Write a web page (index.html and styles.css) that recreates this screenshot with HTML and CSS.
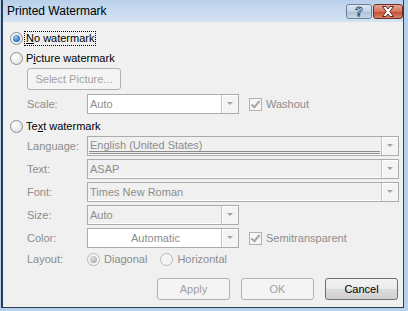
FILE: index.html
```html
<!DOCTYPE html>
<html lang="en">
<head>
    <meta charset="UTF-8">
    <title>Printed Watermark</title>
    <link rel="stylesheet" href="styles.css">
</head>
<body>
    <div class="window">
        <div class="frame">
            <!-- Title bar -->
            <div class="titlebar">
                <span class="title">Printed Watermark</span>
                <div class="caption-buttons">
                    <span class="cap help">?</span>
                    <span class="cap close">
                        <svg width="14" height="11" viewBox="0 0 14 11">
                            <path d="M1.5 0.5 H5 L7 3 L9 0.5 H12.5 L8.8 5.5 L12.5 10.5 H9 L7 8 L5 10.5 H1.5 L5.2 5.5 Z" fill="#fff" stroke="#5a2a22" stroke-width="1" stroke-linejoin="round"/>
                        </svg>
                    </span>
                </div>
            </div>

            <!-- Dialog body -->
            <div class="client">
                <div class="opt first">
                    <span class="radio on"></span>
                    <span class="focus"><u>N</u>o watermark</span>
                </div>
                <div class="opt">
                    <span class="radio"></span>
                    <span class="opt-text">P<u>i</u>cture watermark</span>
                </div>
                <div class="indent">
                    <span class="btn disabled pic">Select Picture...</span>
                </div>
                <div class="field">
                    <span class="label">Scale:</span>
                    <div class="combo short white">
                        <span class="val">Auto</span>
                        <span class="drop"></span>
                    </div>
                    <span class="check"></span>
                    <span class="muted">Washout</span>
                </div>
                <div class="opt">
                    <span class="radio"></span>
                    <span class="opt-text">Te<u>x</u>t watermark</span>
                </div>
                <div class="field tight">
                    <span class="label">Language:</span>
                    <div class="combo long">
                        <span class="val lined">English (United States)</span>
                        <span class="drop"></span>
                    </div>
                </div>
                <div class="field">
                    <span class="label">Text:</span>
                    <div class="combo long">
                        <span class="val">ASAP</span>
                        <span class="drop"></span>
                    </div>
                </div>
                <div class="field">
                    <span class="label">Font:</span>
                    <div class="combo long">
                        <span class="val">Times New Roman</span>
                        <span class="drop"></span>
                    </div>
                </div>
                <div class="field">
                    <span class="label">Size:</span>
                    <div class="combo short">
                        <span class="val">Auto</span>
                        <span class="drop"></span>
                    </div>
                </div>
                <div class="field">
                    <span class="label">Color:</span>
                    <div class="combo short white">
                        <span class="val center">Automatic</span>
                        <span class="drop"></span>
                    </div>
                    <span class="check"></span>
                    <span class="muted">Semitransparent</span>
                </div>
                <div class="field layout">
                    <span class="label">Layout:</span>
                    <span class="radio dis on"></span>
                    <span class="muted radio-label">Diagonal</span>
                    <span class="radio dis"></span>
                    <span class="muted radio-label">Horizontal</span>
                </div>

                <!-- Dialog buttons -->
                <div class="actions">
                    <span class="btn disabled">Apply</span>
                    <span class="btn disabled">OK</span>
                    <span class="btn">Cancel</span>
                </div>
            </div>
        </div>
    </div>
</body>
</html>
```

FILE: styles.css
```css
/* General */
body {
    margin: 0;
    font-family: "Liberation Sans", Arial, sans-serif;
    font-size: 11px;
    color: #000;
}

.window {
    width: 408px;
    height: 311px;
    box-sizing: border-box;
    padding: 0 4px 3px 1px;
    background: #b6d1ec;
}
.frame {
    height: 100%;
    box-sizing: border-box;
    border-left: 2px solid #2c3e56;
    border-right: 1px solid #2c3e56;
    border-bottom: 1px solid #2c3e56;
    display: flex;
    flex-direction: column;
}

/* Title bar */
.titlebar {
    height: 22px;
    flex: none;
    display: flex;
    align-items: center;
    justify-content: space-between;
    padding: 0 0 0 4px;
    background: linear-gradient(to bottom, #b9d0ea 0%, #c6d9ee 45%, #d4e3f3 100%);
}
.title {
    font-size: 12px;
    color: #000;
    margin-top: -1px;
}
.caption-buttons {
    display: flex;
    gap: 1px;
    align-self: flex-start;
    margin-top: 4px;
}
.cap {
    height: 15px;
    box-sizing: border-box;
    border: 1px solid #6b7f99;
    border-radius: 3px;
    display: flex;
    align-items: center;
    justify-content: center;
}
.help {
    width: 26px;
    background: linear-gradient(to bottom, #dfe8f2 0%, #c4d3e4 50%, #aebfd4 51%, #c9d8e8 100%);
    color: #fff;
    font-weight: bold;
    font-size: 13px;
    -webkit-text-stroke: 0.8px #2f3f55;
    line-height: 1;
}
.close {
    width: 30px;
    border-color: #6d2e24;
    background: linear-gradient(to bottom, #e8a595 0%, #d7745e 50%, #c54a30 51%, #d9836b 100%);
}

/* Dialog body */
.client {
    flex: 1;
    background: #f0f0f0;
    display: flex;
    flex-direction: column;
    color: #000;
}

.opt {
    height: 16px;
    display: flex;
    align-items: center;
    margin-top: 4px;
    padding-left: 7px;
}
.opt.first {
    margin-top: 8px;
}
.opt-text {
    padding-left: 3px;
}
.focus {
    border: 1px dotted #000;
    margin-left: 1px;
    padding: 0 1px 0 1px;
    line-height: 13px;
}
u {
    text-decoration: underline;
    text-underline-offset: 1px;
}

/* Radios */
.radio {
    width: 13px;
    height: 13px;
    box-sizing: border-box;
    border-radius: 50%;
    border: 1px solid #8a8f95;
    background: radial-gradient(circle at 35% 35%, #ffffff 0%, #f0f0f0 45%, #d8d8d8 100%);
    position: relative;
    flex: none;
}
.radio.on::after {
    content: "";
    position: absolute;
    left: 2px;
    top: 2px;
    width: 7px;
    height: 7px;
    border-radius: 50%;
    background: radial-gradient(circle at 40% 35%, #9fd0f5 0%, #3f86cf 50%, #1a4f96 100%);
}
.radio.dis {
    border-color: #b8b8b8;
    background: #f4f4f4;
}
.radio.dis.on::after {
    background: radial-gradient(circle at 40% 35%, #e0e0e0 0%, #b0b0b0 70%, #9a9a9a 100%);
}

/* Buttons */
.indent {
    margin-top: 2px;
    padding-left: 24px;
}
.btn {
    width: 73px;
    height: 22px;
    box-sizing: border-box;
    display: flex;
    align-items: center;
    justify-content: center;
    border: 1px solid #707070;
    border-radius: 3px;
    background: linear-gradient(to bottom, #f2f2f2 0%, #ebebeb 49%, #dddddd 50%, #cfcfcf 100%);
    color: #000;
}
.btn.disabled {
    border-color: #adb2b5;
    background: #f4f4f4;
    color: #a2a2a2;
}
.btn.pic {
    width: 94px;
}

/* Fields */
.field {
    height: 20px;
    display: flex;
    align-items: center;
    margin-top: 3px;
    padding-left: 24px;
    color: #8d8d8d;
}
.field.tight {
    margin-top: 2px;
}
.field:nth-child(4) {
    margin-top: 4px;
}
.label {
    width: 60px;
    flex: none;
}
.muted {
    color: #8d8d8d;
}

.combo {
    height: 20px;
    box-sizing: border-box;
    border: 1px solid #ababab;
    background: #f0f0f0;
    box-shadow: inset 0 -1px 0 #fff;
    display: flex;
    flex: none;
}
.combo.white {
    background: #fff;
    box-shadow: none;
}
.combo.short {
    width: 152px;
}
.combo.long {
    width: 312px;
}
.val {
    flex: 1;
    padding-left: 2px;
    display: flex;
    align-items: center;
    color: #8d8d8d;
}
.val.center {
    justify-content: center;
}
.val.lined {
    margin: 0 1px 1px 1px;
    padding-left: 1px;
    border-bottom: 3px double #8c8c8c;
    padding-top: 1px;
}
.drop {
    width: 16px;
    flex: none;
    border-left: 1px solid #c2c2c2;
    background: #f4f4f4;
    box-shadow: inset 1px 1px 0 #fff;
    position: relative;
}
.drop::after {
    content: "";
    position: absolute;
    left: 5px;
    top: 7px;
    border-left: 3px solid transparent;
    border-right: 3px solid transparent;
    border-top: 3px solid #a3a3a3;
}

/* Checkboxes */
.check {
    width: 13px;
    height: 13px;
    box-sizing: border-box;
    border: 1px solid #b1b1b1;
    background: #f6f6f6;
    margin: 0 4px 0 10px;
    position: relative;
    flex: none;
}
.check::after {
    content: "";
    position: absolute;
    left: 3px;
    top: 0px;
    width: 3px;
    height: 7px;
    border-right: 2px solid #a8a8a8;
    border-bottom: 2px solid #a8a8a8;
    transform: rotate(40deg);
}

/* Layout row */
.field.layout {
    height: 16px;
}
.radio-label {
    margin: 0 13px 0 4px;
}

/* Dialog buttons */
.actions {
    margin-top: 11px;
    display: flex;
    justify-content: flex-end;
    gap: 11px;
    padding-right: 5px;
}
```
